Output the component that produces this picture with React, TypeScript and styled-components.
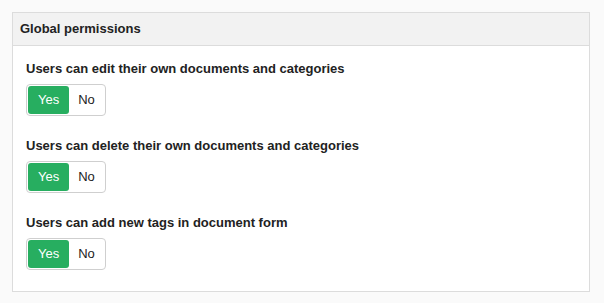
import styled, {createGlobalStyle} from "styled-components";

const GlobalStyle = createGlobalStyle`
  body {
    margin: 0;
    background: #fafafa;
    font-family: "Liberation Sans", Arial, sans-serif;
    color: #222;
  }
`;

const settings = [
    {id: 1, label: 'Users can edit their own documents and categories', value: true},
    {id: 2, label: 'Users can delete their own documents and categories', value: true},
    {id: 3, label: 'Users can add new tags in document form', value: true},
];

export default function App() {
    return (
        <>
            <GlobalStyle/>
            <Page>
                <Panel>
                    <PanelHeader>Global permissions</PanelHeader>
                    <PanelBody>
                        {settings.map(item => (
                            <Field key={item.id}>
                                <Label>{item.label}</Label>
                                <Toggle>
                                    <ToggleButton active={item.value}>Yes</ToggleButton>
                                    <ToggleButton active={!item.value}>No</ToggleButton>
                                </Toggle>
                            </Field>
                        ))}
                    </PanelBody>
                </Panel>
            </Page>
        </>
    );
}

const Page = styled.div`
  padding: 12px 14px 10px 12px;
`;

const Panel = styled.div`
  background: #fff;
  border: 1px solid #dcdcdc;
`;

const PanelHeader = styled.div`
  height: 32px;
  line-height: 32px;
  padding: 0 7px;
  background: #f2f2f2;
  border-bottom: 1px solid #dcdcdc;
  font-size: 13px;
  font-weight: bold;
  color: #222;
`;

const PanelBody = styled.div`
  padding: 15px 13px 21px;
  display: flex;
  flex-direction: column;
  gap: 22px;
`;

const Field = styled.div`
  display: flex;
  flex-direction: column;
  align-items: flex-start;
  gap: 7px;
`;

const Label = styled.div`
  font-size: 13px;
  font-weight: bold;
  line-height: 16px;
  color: #222;
`;

const Toggle = styled.div`
  display: flex;
  padding: 1px;
  border: 1px solid #cfcfcf;
  border-radius: 4px;
  background: #fff;
`;

const ToggleButton = styled.div<{ active?: boolean }>`
  height: 28px;
  line-height: 28px;
  padding: 0 ${({active}) => active ? 10 : 9}px;
  border-radius: 3px;
  font-size: 13px;
  text-align: center;
  background: ${({active}) => active ? '#27ae60' : 'transparent'};
  color: ${({active}) => active ? '#fff' : '#222'};
`;
